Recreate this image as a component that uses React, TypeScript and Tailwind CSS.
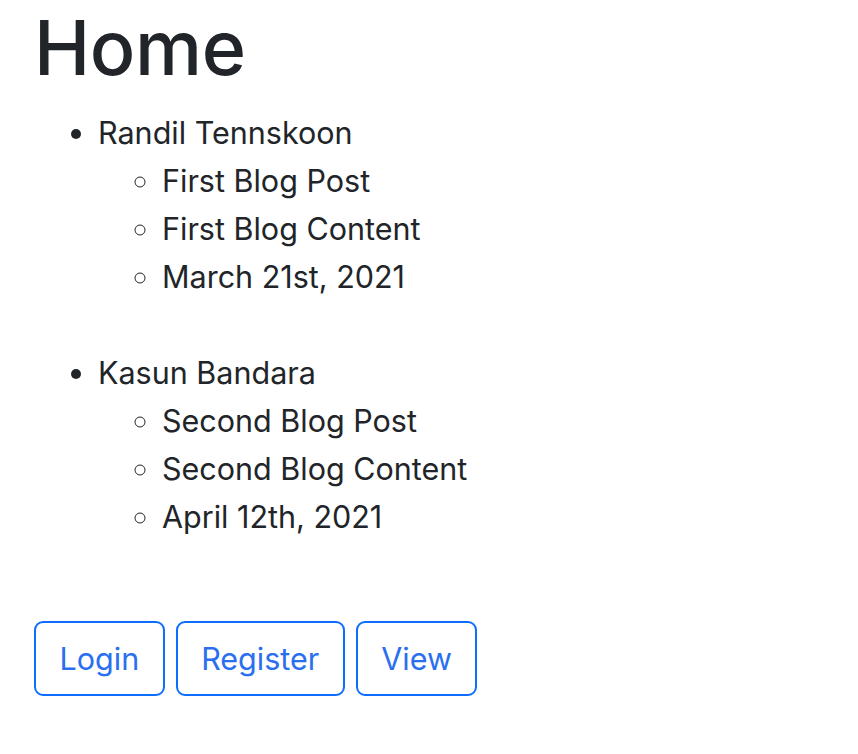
const posts = [
  { author: 'Randil Tennskoon', title: 'First Blog Post', content: 'First Blog Content', date: 'March 21st, 2021' },
  { author: 'Kasun Bandara', title: 'Second Blog Post', content: 'Second Blog Content', date: 'April 12th, 2021' },
]

const App = () => {
  return (
    <div className="px-[34px] text-[#212529] font-['Inter',sans-serif] text-[30.5px] leading-[48px]">
      <h1 className="text-[75.5px] leading-[96px] font-medium mb-[13px] tracking-[-0.4px]">Home</h1>
      {posts.map((post) => (
        <ul key={post.author} className="list-disc pl-16 mb-12">
          <li>
            {post.author}
            <ul className="list-[circle] pl-16">
              <li>{post.title}</li>
              <li>{post.content}</li>
              <li>{post.date}</li>
            </ul>
          </li>
        </ul>
      ))}
      <div className="flex gap-[11px] mt-20">
        {['Login', 'Register', 'View'].map((label) => (
          <button
            key={label}
            className="h-[75px] px-[23.5px] border-2 border-[#0d6efd] rounded-[9px] text-[#2a6ff0] text-[30.5px] leading-[48px]"
          >
            {label}
          </button>
        ))}
      </div>
    </div>
  )
}

export default App
